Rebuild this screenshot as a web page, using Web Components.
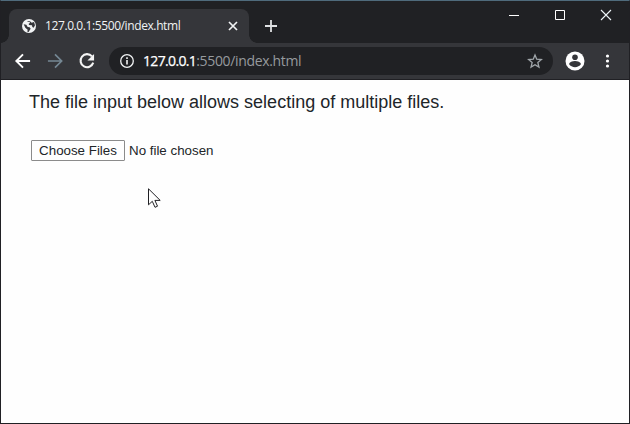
<!DOCTYPE html>
<html lang="en">
<head>
<meta charset="utf-8">
<title>127.0.0.1:5500/index.html</title>
<style>
html, body { margin: 0; height: 100%; overflow: hidden; }
</style>
</head>
<body>
<browser-window>
  <tab-strip slot="top"><browser-tab>127.0.0.1:5500/index.html</browser-tab></tab-strip>
  <tool-bar slot="top"><address-bar><span slot="host">127.0.0.1</span><span slot="path">:5500/index.html</span></address-bar></tool-bar>
  <page-view><span slot="intro">The file input below allows selecting of multiple files.</span><file-picker slot="input">Choose Files<span slot="status">No file chosen</span></file-picker></page-view>
</browser-window>
<script>
const define = (name, html) => customElements.define(name, class extends HTMLElement {
  constructor() {
    super();
    this.attachShadow({ mode: 'open' }).innerHTML = html;
  }
});

define('browser-window', `
<style>
:host { display: flex; flex-direction: column; box-sizing: border-box; width: 630px; height: 424px;
  border: 1px solid #202024; border-top-color: #4f6b7c; background: #202124; }
main { flex: 1; background: #fefefe; display: flex; }
</style>
<slot name="top"></slot><main><slot></slot></main>`);

define('tab-strip', `
<style>
:host { display: flex; height: 42px; background: #202124; box-sizing: border-box; padding: 8px 0 0 8px; }
button { all: unset; width: 46px; height: 28px; }
.new { width: 42px; height: 34px; }
.gap { flex: 1; }
.controls { display: flex; margin-top: -8px; height: 28px; }
svg { display: block; }
</style>
<slot></slot>
<button class="new" aria-label="New tab"><svg width="42" height="34"><path d="M16 17h12M22 11v12" stroke="#dfe1e3" stroke-width="1.8"/></svg></button>
<div class="gap"></div>
<div class="controls">
<button aria-label="Minimize"><svg width="46" height="28"><path d="M18 14.5h10" stroke="#fff"/></svg></button>
<button aria-label="Maximize"><svg width="46" height="28"><path d="M18.500 9.500h9v9h-9z" fill="none" stroke="#fff"/></svg></button>
<button aria-label="Close"><svg width="46" height="28"><path d="M18 9l10 10M28 9L18 19" stroke="#eef6fa" stroke-width="1.1"/></svg></button>
</div>`);

define('browser-tab', `
<style>
:host { display: flex; align-items: center; position: relative; box-sizing: border-box; width: 240px; height: 34px;
  padding: 0 9px 0 12px; background: #35363a; border-radius: 8px 8px 0 0;
  font: 12px "Open Sans", "Noto Sans", sans-serif; color: #f1f3f4; }
:host::before, :host::after { content: ""; position: absolute; bottom: 0; width: 8px; height: 8px; }
:host::before { left: -8px; background: radial-gradient(circle at 0 0, #202124 7.500px, #35363a 8px); }
:host::after { right: -8px; background: radial-gradient(circle at 100% 0, #202124 7.500px, #35363a 8px); }
.title { flex: 1; white-space: nowrap; margin-left: 8px; padding-bottom: 2px; letter-spacing: -0.400px; }
svg { display: block; flex: none; }
</style>
<svg width="16" height="16" viewBox="0 0 24 24"><circle cx="12" cy="12" r="10.500" fill="#f1f3f4"/><path d="M4 9.500l4 .5 2 3.500 3 .5 1.500 2-2 3-1 2-2-.5.500-3-3.500-3zM9.500 5h4l2.500 2 3.500-1 1.500 5-2 3.500-2-1-.5-2.500-4.500-.5-.5-2 2-1-.5-1.500h-3z" fill="#35363a"/></svg>
<span class="title"><slot></slot></span>
<svg width="14" height="14"><path d="M3 3l8 8M11 3l-8 8" stroke="#f1f3f4" stroke-width="1.700"/></svg>`);

define('tool-bar', `
<style>
:host { display: flex; align-items: center; height: 37px; box-sizing: border-box; padding: 0 0 1px 12px; background: #35363a; border-bottom: 1px solid #202024; }
svg { display: block; flex: none; }
.fwd { margin-left: 12px; } .reload { margin-left: 12px; }
::slotted(address-bar) { margin-left: 12px; }
.user { margin-left: 10px; } .menu { margin-left: 9px; }
</style>
<svg width="20" height="20" viewBox="0 0 24 24"><path d="M20.500 12H4.500M12 4l-8 8 8 8" fill="none" stroke="#fff" stroke-width="2.300"/></svg>
<svg class="fwd" width="20" height="20" viewBox="0 0 24 24"><path d="M3.500 12h16M12 4l8 8-8 8" fill="none" stroke="#758894" stroke-width="2"/></svg>
<svg class="reload" width="20" height="20" viewBox="0 0 24 24"><path d="M18 6.500A7.800 7.800 0 1 0 19.500 14" fill="none" stroke="#f4f4f4" stroke-width="2.500"/><path d="M20.500 3.500v8h-8z" fill="#f4f4f4"/></svg>
<slot></slot>
<svg class="user" width="24" height="24" viewBox="0 0 24 24"><circle cx="12" cy="12" r="9.500" fill="#fff"/><circle cx="12" cy="8.300" r="2.800" fill="#35363a"/><path d="M6 15c1-4 11-4 12 0-2.500 4.200-9.500 4.200-12 0z" fill="#35363a"/></svg>
<svg class="menu" width="20" height="20"><g fill="#fff"><circle cx="11.500" cy="5" r="1.600"/><circle cx="11.500" cy="10" r="1.600"/><circle cx="11.500" cy="15" r="1.600"/></g></svg>`);

define('address-bar', `
<style>
:host { display: flex; align-items: center; box-sizing: border-box; width: 444px; height: 28px; flex: none;
  padding: 0 10px; border-radius: 14px; background: #202124; color: #969a9e;
  font: 14px "Open Sans", "Noto Sans", sans-serif; white-space: nowrap; }
.host { color: #fff; margin-left: 8px; letter-spacing: -0.650px; -webkit-text-stroke: .25px #fff; }
.path { flex: 1; letter-spacing: -0.340px; }
svg { display: block; flex: none; }
</style>
<svg width="16" height="16"><circle cx="8" cy="8" r="6.300" fill="none" stroke="#f1f3f4" stroke-width="1.300"/><path d="M8 7v4.500M8 4.300v1.600" stroke="#fff" stroke-width="1.500"/></svg>
<span class="host"><slot name="host"></slot></span><span class="path"><slot name="path"></slot></span>
<svg width="16" height="16" viewBox="0 0 24 24"><path d="M12 3l2.600 6.300 6.900.6-5.200 4.500 1.600 6.700L12 17.500l-5.900 3.600 1.600-6.700L2.500 9.900l6.900-.6z" fill="none" stroke="#a0a6aa" stroke-width="2"/></svg>`);

define('page-view', `
<style>
:host { display: flex; flex-direction: column; flex: 1; position: relative; padding: 10px 28px; background: #fefefe;
  font: 18px/24px "Liberation Sans", Arial, sans-serif; color: #212529; }
p { margin: 0 0 26px; white-space: nowrap; }
svg { position: absolute; left: 147px; top: 108px; }
</style>
<p><slot name="intro"></slot></p><slot name="input"></slot>
<svg width="14" height="21"><path d="M.5.8v16l3.800-3.500 2.700 6 2.500-1.100-2.600-5.800h5.300z" fill="#fff" stroke="#202024"/></svg>`);

define('file-picker', `
<style>
:host { display: flex; align-items: center; margin-left: 2px; font: 13.333px/19px "Liberation Sans", Arial, sans-serif; color: #212529; white-space: nowrap; }
button { box-sizing: border-box; width: 94px; height: 21px; padding: 0; border: 1px solid #8b8b8b; border-radius: 1px; background: #fefefe;
  font: inherit; color: inherit; text-align: center; }
.status { margin-left: 4px; }
</style>
<button><slot></slot></button><span class="status"><slot name="status"></slot></span>`);
</script>
</body>
</html>
